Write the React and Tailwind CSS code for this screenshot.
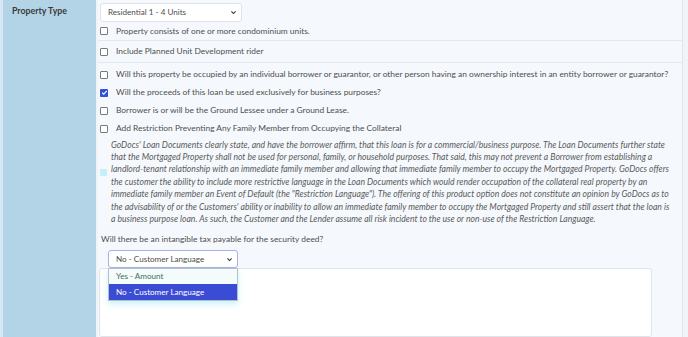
import React from 'react';

const Box = ({ checked }) => {
  if (checked) {
    return (
      <span className="inline-flex h-[8px] w-[8px] shrink-0 items-center justify-center rounded-[1px] bg-[#2f52d6]">
        <svg viewBox="0 0 8 8" className="h-[7px] w-[7px]">
          <path d="M1.3 4.1 L3.1 5.9 L6.7 2.1" fill="none" stroke="white" strokeWidth="1.3" />
        </svg>
      </span>
    );
  }
  return <span className="inline-block h-[8px] w-[8px] shrink-0 rounded-[1px] border border-[#7a7a7a] bg-white" />;
};

const Check = ({ label, checked }) => (
  <div className="flex h-[18px] items-center gap-[8px] pl-[2px]">
    <Box checked={checked} />
    <span className="whitespace-nowrap">{label}</span>
  </div>
);

const Chevron = () => (
  <svg viewBox="0 0 10 10" className="h-[7px] w-[7px]">
    <path d="M2 3.5 L5 6.5 L8 3.5" fill="none" stroke="#333" strokeWidth="1.6" />
  </svg>
);

const para = [
  "GoDocs' Loan Documents clearly state, and have the borrower affirm, that this loan is for a commercial/business purpose. The Loan Documents further state",
  'that the Mortgaged Property shall not be used for personal, family, or household purposes. That said, this may not prevent a Borrower from establishing a',
  'landlord-tenant relationship with an immediate family member and allowing that immediate family member to occupy the Mortgaged Property. GoDocs offers',
  'the customer the ability to include more restrictive language in the Loan Documents which would render occupation of the collateral real property by an',
  'immediate family member an Event of Default (the "Restriction Language"). The offering of this product option does not constitute an opinion by GoDocs as to',
  "the advisability of or the Customers' ability or inability to allow an immediate family member to occupy the Mortgaged Property and still assert that the loan is",
  'a business purpose loan. As such, the Customer and the Lender assume all risk incident to the use or non-use of the Restriction Language.',
];

const App = () => {
  return (
    <div className="flex h-[337px] w-[688px] overflow-hidden bg-white text-[8.4px] text-[#4e4e4e]" style={{ fontFamily: 'Lato, "Open Sans", sans-serif' }}>
      <div className="w-[3px] shrink-0 bg-[#d6e8f1]" />
      <div className="w-[93px] shrink-0 whitespace-nowrap bg-[#b3d4e6] pl-[9px] pt-[4px] text-[8.8px] font-bold text-[#3a3a3a]">Property Type</div>
      <div className="w-[2px] shrink-0 bg-[#eef4f8]" />
      <div className="flex min-w-0 flex-1 flex-col border-r border-[#e2e5ea] bg-[#f5f9fd]">
        <div className="h-[42px] border-b border-[#e3e8ee] pl-[2px] pt-[3px]">
          <div className="flex h-[19px] w-[142px] items-center justify-between rounded-[3px] border border-[#dfe3e8] bg-white pl-[7px] pr-[4px] text-[8.1px]">
            <span>Residential 1 - 4 Units</span>
            <Chevron />
          </div>
          <div className="-ml-[2px]">
            <Check label="Property consists of one or more condominium units." />
          </div>
        </div>
        <div className="flex h-[22px] items-center border-b border-[#e3e8ee] pt-[1px]">
          <Check label="Include Planned Unit Development rider" />
        </div>
        <div className="flex flex-col pt-[3px]">
          <Check label="Will this property be occupied by an individual borrower or guarantor, or other person having an ownership interest in an entity borrower or guarantor?" />
          <Check checked label="Will the proceeds of this loan be used exclusively for business purposes?" />
          <Check label="Borrower is or will be the Ground Lessee under a Ground Lease." />
          <Check label="Add Restriction Preventing Any Family Member from Occupying the Collateral" />
          <div className="mt-[1px] flex items-start gap-[4px] pl-[2px]">
            <span className="mt-[30px] inline-block h-[7px] w-[7px] shrink-0 rounded-[1px] bg-[#c4f0f8]" />
            <div className="text-[8.6px] italic leading-[12.4px] text-[#5a5a5a]">
              {para.map((l) => (
                <div key={l} className="whitespace-nowrap">{l}</div>
              ))}
            </div>
          </div>
          <div className="mt-[8px] pl-[3px]">Will there be an intangible tax payable for the security deed?</div>
          <div className="relative ml-[10px] mt-[4px] flex h-[18px] w-[130px] items-center justify-between rounded-[3px] border border-[#a9afe6] bg-white pl-[7px] pr-[4px] text-[8.1px]">
            <span>No - Customer Language</span>
            <Chevron />
            <div className="absolute left-[-1px] top-[17px] z-10 w-[130px] border border-[#b9bec6] bg-white shadow-[0_3px_6px_rgba(120,230,245,0.45)]">
              <div className="flex h-[15px] items-center bg-[#f3fbfb] pl-[7px] text-[#3e6f60]">Yes - Amount</div>
              <div className="flex h-[16px] items-center bg-[#3a4cd3] pl-[7px] text-white">No - Customer Language</div>
            </div>
          </div>
          <div className="ml-[1px] h-[69px] w-[553px] rounded-[3px] border border-[#dfe4ea] bg-white" />
        </div>
      </div>
      <div className="w-[5px] shrink-0 bg-[#f1f3f6]" />
    </div>
  );
};

export default App;
